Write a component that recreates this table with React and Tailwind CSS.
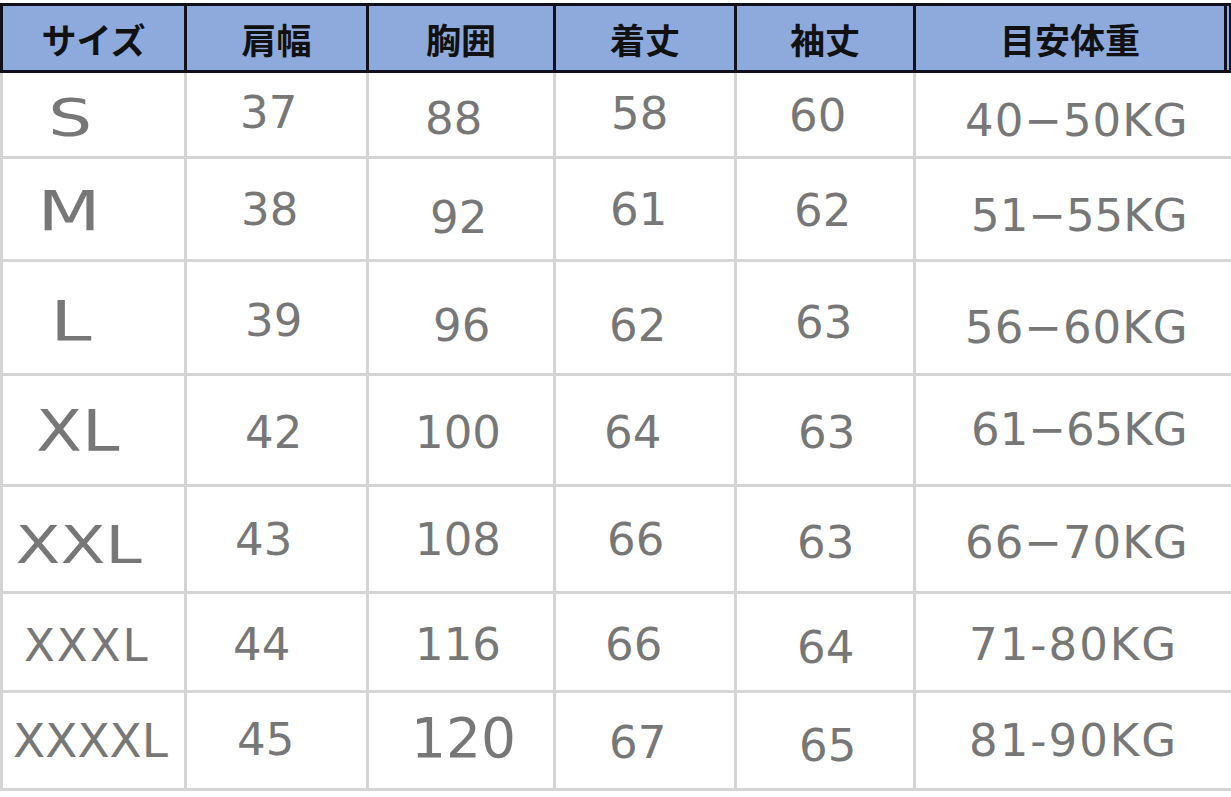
import React from "react";

const heads = ["サイズ", "肩幅", "胸囲", "着丈", "袖丈", "目安体重"];

// each cell: text + its own offsets inside the cell (the chart is hand-placed)
const rows = [
  {
    h: "h-[86px]",
    cells: [
      { t: "S", c: "pl-[34px] pt-[19px] text-[52px] scale-x-[1.33] origin-left" },
      { t: "37", c: "pl-[53px] pt-[17px]" },
      { t: "88", c: "pl-[56px] pt-[23px]" },
      { t: "58", c: "pl-[55px] pt-[18px]" },
      { t: "60", c: "pl-[52px] pt-[20px]" },
      { t: "40−50KG", c: "pl-[49px] pt-[25px] tracking-[1px]" },
    ],
  },
  {
    h: "h-[103px]",
    cells: [
      { t: "M", c: "pl-[26px] pt-[25px] text-[55px] scale-x-[1.33] origin-left" },
      { t: "38", c: "pl-[54px] pt-[28px]" },
      { t: "92", c: "pl-[61px] pt-[36px]" },
      { t: "61", c: "pl-[54px] pt-[28px]" },
      { t: "62", c: "pl-[57px] pt-[29px]" },
      { t: "51−55KG", c: "pl-[55px] pt-[34px]" },
    ],
  },
  {
    h: "h-[114px]",
    cells: [
      { t: "L", c: "pl-[35px] pt-[32px] text-[55px] scale-x-[1.35] origin-left" },
      { t: "39", c: "pl-[58px] pt-[36px]" },
      { t: "96", c: "pl-[64px] pt-[41px]" },
      { t: "62", c: "pl-[53px] pt-[41px]" },
      { t: "63", c: "pl-[58px] pt-[38px]" },
      { t: "56−60KG", c: "pl-[49px] pt-[43px] tracking-[1px]" },
    ],
  },
  {
    h: "h-[111px]",
    cells: [
      { t: "XL", c: "pl-[28px] pt-[27px] text-[57px] scale-x-[1.18] origin-left" },
      { t: "42", c: "pl-[58px] pt-[34px]" },
      { t: "100", c: "pl-[46px] pt-[34px]" },
      { t: "64", c: "pl-[48px] pt-[34px]" },
      { t: "63", c: "pl-[61px] pt-[34px]" },
      { t: "61−65KG", c: "pl-[55px] pt-[31px]" },
    ],
  },
  {
    h: "h-[107px]",
    cells: [
      { t: "XXL", c: "pl-[10px] pt-[32px] text-[52px] scale-x-[1.26] origin-left" },
      { t: "43", c: "pl-[48px] pt-[30px]" },
      { t: "108", c: "pl-[46px] pt-[30px]" },
      { t: "66", c: "pl-[51px] pt-[30px]" },
      { t: "63", c: "pl-[60px] pt-[33px]" },
      { t: "66−70KG", c: "pl-[49px] pt-[33px] tracking-[1px]" },
    ],
  },
  {
    h: "h-[99px]",
    cells: [
      { t: "XXXL", c: "pl-[21px] pt-[29px] tracking-[2px]" },
      { t: "44", c: "pl-[46px] pt-[28px]" },
      { t: "116", c: "pl-[46px] pt-[28px]" },
      { t: "66", c: "pl-[49px] pt-[28px]" },
      { t: "64", c: "pl-[60px] pt-[31px]" },
      { t: "71-80KG", c: "pl-[53px] pt-[28px] tracking-[2px]" },
    ],
  },
  {
    h: "h-[98px]",
    cells: [
      { t: "XXXXL", c: "pl-[10px] pt-[24px] text-[47px]" },
      { t: "45", c: "pl-[50px] pt-[24px]" },
      { t: "120", c: "pl-[42px] pt-[18px] text-[55px]" },
      { t: "67", c: "pl-[53px] pt-[27px]" },
      { t: "65", c: "pl-[62px] pt-[30px]" },
      { t: "81-90KG", c: "pl-[53px] pt-[25px] tracking-[2px]" },
    ],
  },
];

export default function App() {
  return (
    <div className="w-[1231px] h-[797px] bg-white overflow-hidden">
      {/* header */}
      <div className="mt-[3px] grid grid-cols-[187px_182px_187px_181px_179px_311px_1fr] border-y-[3px] border-[#10111c] bg-[#8eaadc]">
        {heads.map((h, i) => (
          <div
            key={h}
            className={
              "h-[64px] flex items-center justify-center border-r-[3px] border-[#10111c] " +
              (i === 0 ? "border-l-[3px]" : "")
            }
          >
            <span className="text-[35px] font-bold leading-none text-[#111] font-['Noto_Sans_CJK_JP','Noto_Sans_CJK_SC',sans-serif]">
              {h}
            </span>
          </div>
        ))}
        <div className="h-[64px] border-r-[2px] border-[#10111c]" />
      </div>

      {/* body */}
      {rows.map((r, ri) => (
        <div
          key={ri}
          className={
            "grid grid-cols-[187px_182px_187px_181px_179px_1fr] border-b-[3px] border-[#d5d5d5] " +
            r.h
          }
        >
          {r.cells.map((cell, ci) => (
            <div
              key={ci}
              className={
                "h-full border-[#d5d5d5] " +
                (ci === 0 ? "border-l-[3px] border-r-[3px] " : ci < 5 ? "border-r-[3px] " : "")
              }
            >
              <div
                className={
                  "whitespace-nowrap leading-none text-[45px] text-[#777] font-['DejaVu_Sans',sans-serif] " +
                  cell.c
                }
              >
                {cell.t}
              </div>
            </div>
          ))}
        </div>
      ))}
    </div>
  );
}
